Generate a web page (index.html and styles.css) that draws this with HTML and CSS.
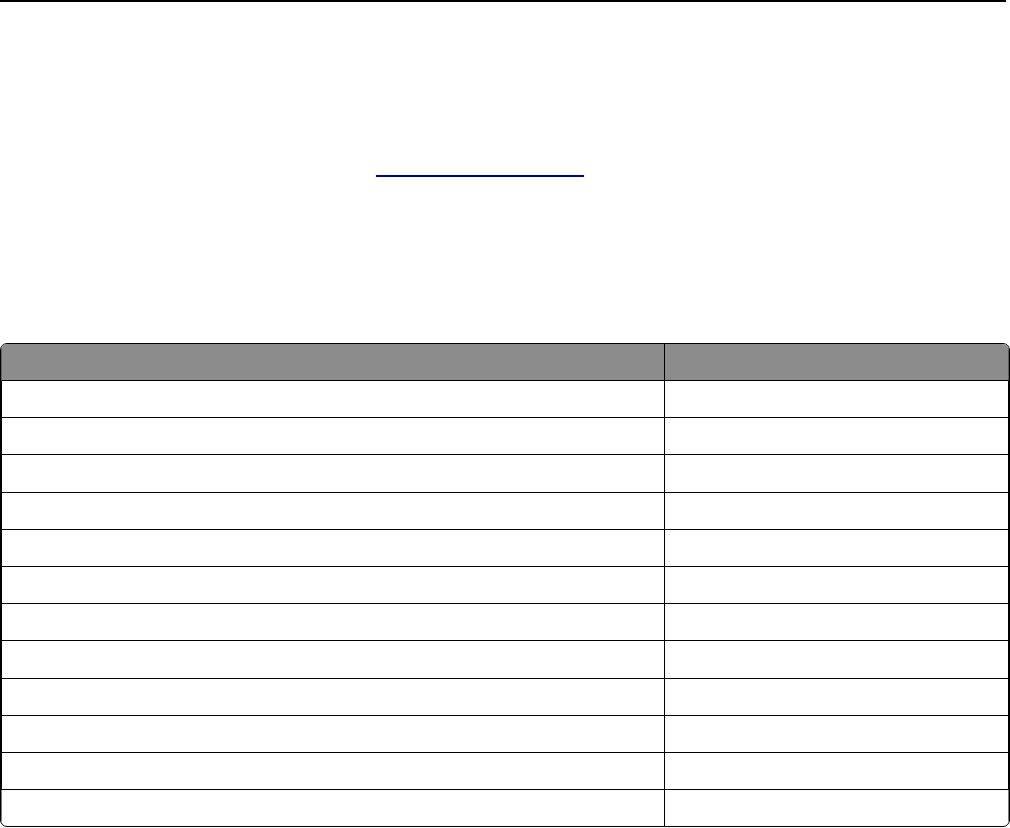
FILE: index.html
```html
<!DOCTYPE html>
<html lang="en">
<head>
<meta charset="utf-8">
<title>Page</title>
<link rel="stylesheet" href="styles.css">
</head>
<body>
<div class="page">
  <div class="top-rule"></div>
  <p class="intro"><a class="link" href="#" aria-label="link"></a></p>
  <div class="table">
    <div class="row head"><div class="cell c1"></div><div class="cell c2"></div></div>
    <div class="row"><div class="cell c1"></div><div class="cell c2"></div></div>
    <div class="row"><div class="cell c1"></div><div class="cell c2"></div></div>
    <div class="row"><div class="cell c1"></div><div class="cell c2"></div></div>
    <div class="row"><div class="cell c1"></div><div class="cell c2"></div></div>
    <div class="row"><div class="cell c1"></div><div class="cell c2"></div></div>
    <div class="row"><div class="cell c1"></div><div class="cell c2"></div></div>
    <div class="row"><div class="cell c1"></div><div class="cell c2"></div></div>
    <div class="row"><div class="cell c1"></div><div class="cell c2"></div></div>
    <div class="row"><div class="cell c1"></div><div class="cell c2"></div></div>
    <div class="row"><div class="cell c1"></div><div class="cell c2"></div></div>
    <div class="row"><div class="cell c1"></div><div class="cell c2"></div></div>
    <div class="row last"><div class="cell c1"></div><div class="cell c2"></div></div>
  </div>
</div>
</body>
</html>
```

FILE: styles.css
```css
html, body {
  margin: 0;
  padding: 0;
  background: #ffffff;
  font-family: "Liberation Sans", Arial, sans-serif;
}

.page {
  width: 1010px;
  height: 828px;
  overflow: hidden;
}

.top-rule {
  width: 1006px;
  height: 2px;
  background: #000000;
}

.intro {
  margin: 173px 0 0 376px;
  height: 2px;
}

.link {
  display: block;
  width: 208px;
  height: 2px;
  background: #00009b;
}

.table {
  margin-top: 166px;
  width: 1008px;
  border: 1px solid #000000;
  border-radius: 7px;
  overflow: hidden;
}

.row {
  display: flex;
  height: 36.2px;
  border-bottom: 1px solid #000000;
  border-left: 1px solid #000000;
  border-right: 1px solid #000000;
}

.row.head {
  height: 36px;
  background: #8c8c8c;
  border-left-color: #666666;
  border-right-color: #5a5a5a;
}

.row.last {
  border-bottom: none;
  border-left-color: #7a7a7a;
  border-right-color: #7a7a7a;
}

.cell.c1 {
  width: 662px;
  border-right: 1px solid #000000;
}

.cell.c2 {
  flex: 1;
}
```
